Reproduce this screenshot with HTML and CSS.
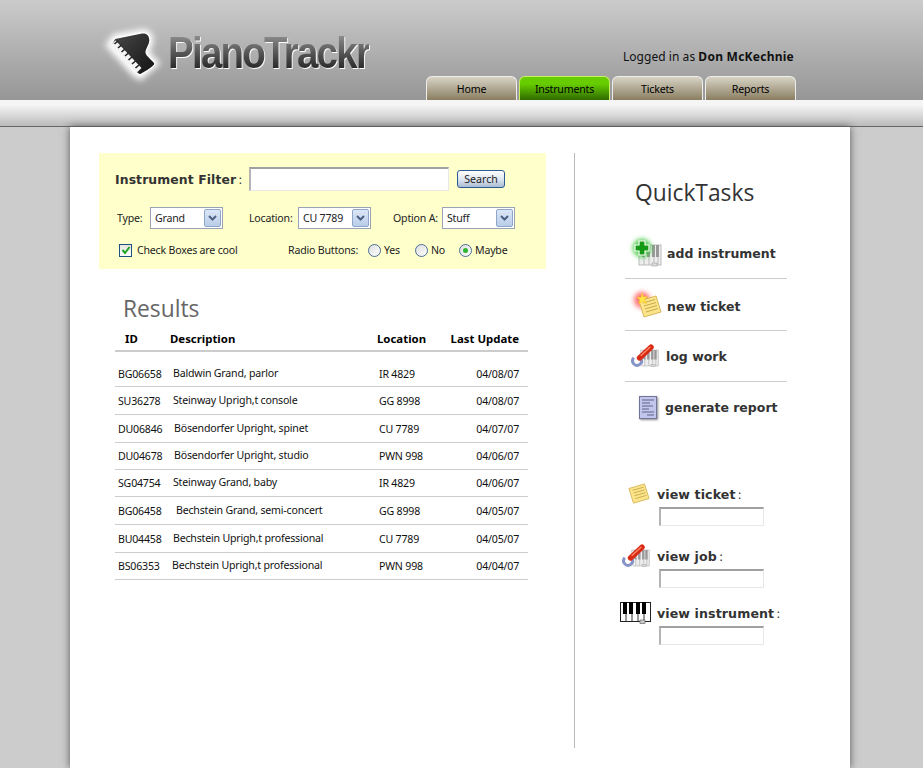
FILE: index.html
```html
<!DOCTYPE html>
<html lang="en">
<head>
<meta charset="utf-8">
<title>PianoTrackr</title>
<link rel="stylesheet" href="styles.css">
</head>
<body>
<svg class="defs" width="0" height="0" aria-hidden="true">
  <defs>
    <symbol id="keys-grey" viewBox="0 0 24 24">
      <rect x="1" y="2" width="22" height="20" fill="#eee" stroke="#bbb"/>
      <path d="M6 2v20M11 2v20M16 2v20M20 2v20" stroke="#bbb"/>
      <path d="M4 2h3v12H4zM9 2h3v12H9zM14 2h3v12h-3zM18 2h3v12h-3z" fill="#999"/>
      <rect x="14" y="20" width="5" height="3" fill="#ddd" stroke="#aaa" stroke-width=".7"/>
    </symbol>
    <symbol id="wrench" viewBox="0 0 28 24">
      <use href="#keys-grey" x="9" y="4" width="19" height="20"/>
      <path d="M2.8 13.8 A4.5 4.5 0 1 0 10.4 15.4" fill="none" stroke="#fff" stroke-width="4.4"/>
      <path d="M2.8 13.8 A4.5 4.5 0 1 0 10.4 15.4" fill="none" stroke="#8794c8" stroke-width="3"/>
      <path d="M8.5 14 L20 3.2" stroke="#d92a14" stroke-width="5.4" stroke-linecap="round"/>
      <path d="M10 11.5 L19 3.2" stroke="#ff8a6a" stroke-width="1.3" stroke-linecap="round"/>
    </symbol>
    <symbol id="note" viewBox="0 0 26 24">
      <path d="M2 6 L19 1 L24 17 L7 22 Z" fill="#fbe48a" stroke="#d7b65a"/>
      <path d="M6 8 L18 4.5M7 11 L19 7.5M8 14 L20 10.5M9 17 L21 13.5" stroke="#c9a94e"/>
    </symbol>
  </defs>
</svg>

<header class="top">
  <div class="top-inner">
    <div class="logo">
      <svg class="logo-mark" width="65" height="65" viewBox="0 0 65 65" aria-hidden="true">
        <defs>
          <filter id="glow" x="-40%" y="-40%" width="180%" height="180%"><feGaussianBlur stdDeviation="3"/></filter>
          <linearGradient id="body" x1="0" y1="0" x2="1" y2="1"><stop offset="0" stop-color="#4a4a4a"/><stop offset="1" stop-color="#111"/></linearGradient>
        </defs>
        <path d="M9 23 L15 15 L44 10 Q51 12 50 20 Q48 27 46 30 Q50 36 56 41 L40 55 L35 52 Z" fill="#fff" stroke="#fff" stroke-width="6" filter="url(#glow)"/>
        <path d="M10.7 23 L15 16.3 L43 10.7 Q49.5 11 50 18 C50 23 46.5 26 46 30 C46 34 52 37 55 41.3 C55 45 45 50 40 53 L36.7 50.7 Z" fill="url(#body)" stroke="#fff" stroke-width="1.2"/>
        <path d="M10.7 23 L15.5 18.5 L41.5 46 L36.7 50.7 Z" fill="#f4f4f4"/>
        <path d="M14.5 22 L18 19M18 26 L21.5 23M21.5 30 L25 27M25 34 L28.5 31M28.5 38 L32 35M32 42 L35.5 39M35.5 46 L39 43" stroke="#222" stroke-width="1.6"/>
      </svg>
      <span class="logo-text">PianoTrackr</span>
    </div>
    <div class="top-right">
      <p class="login">Logged in as <b>Don McKechnie</b></p>
      <nav class="tabs">
        <a class="tab">Home</a>
        <a class="tab tab-on">Instruments</a>
        <a class="tab">Tickets</a>
        <a class="tab">Reports</a>
      </nav>
    </div>
  </div>
</header>
<div class="band"></div>

<main class="page">
  <section class="left">
    <form class="filter">
      <div class="f-row1">
        <label class="f-title">Instrument Filter<span class="colon">:</span></label>
        <span class="text-in f-input"></span>
        <button type="button" class="search">Search</button>
      </div>
      <div class="f-row2">
        <span class="l-type">Type:</span>
        <span class="sel"><span>Grand</span><i class="arrow"><svg width="9" height="6" viewBox="0 0 9 6"><path d="M1 1l3.5 3.5L8 1" fill="none" stroke="#4d6185" stroke-width="2"/></svg></i></span>
        <span class="l-loc">Location:</span>
        <span class="sel"><span>CU 7789</span><i class="arrow"><svg width="9" height="6" viewBox="0 0 9 6"><path d="M1 1l3.5 3.5L8 1" fill="none" stroke="#4d6185" stroke-width="2"/></svg></i></span>
        <span class="l-opt">Option A:</span>
        <span class="sel"><span>Stuff</span><i class="arrow"><svg width="9" height="6" viewBox="0 0 9 6"><path d="M1 1l3.5 3.5L8 1" fill="none" stroke="#4d6185" stroke-width="2"/></svg></i></span>
      </div>
      <div class="f-row3">
        <span class="check"><svg width="10" height="10" viewBox="0 0 10 10"><path d="M1.5 5l2.5 3L8.5 2" fill="none" stroke="#21a121" stroke-width="2"/></svg></span>
        <span class="check-l">Check Boxes are cool</span>
        <span class="radio-title">Radio Buttons:</span>
        <span class="radio"></span><span class="r-yes">Yes</span>
        <span class="radio"></span><span class="r-no">No</span>
        <span class="radio radio-on"></span><span class="r-maybe">Maybe</span>
      </div>
    </form>

    <h2 class="results">Results</h2>
    <table class="grid">
      <colgroup><col class="c1"><col class="c2"><col class="c3"><col class="c4"></colgroup>
      <thead>
        <tr><th class="h-id">ID</th><th>Description</th><th>Location</th><th class="date">Last Update</th></tr>
      </thead>
      <tbody>
        <tr class="first tall"><td>BG06658</td><td class="d">Baldwin Grand, parlor</td><td class="loc">IR 4829</td><td class="date">04/08/07</td></tr>
        <tr class="tall"><td>SU36278</td><td class="d">Steinway Uprigh,t console</td><td class="loc">GG 8998</td><td class="date">04/08/07</td></tr>
        <tr class="tall"><td>DU06846</td><td class="d d-r1">Bösendorfer Upright, spinet</td><td class="loc">CU 7789</td><td class="date">04/07/07</td></tr>
        <tr><td>DU04678</td><td class="d d-r1">Bösendorfer Upright, studio</td><td class="loc">PWN 998</td><td class="date">04/06/07</td></tr>
        <tr><td>SG04754</td><td class="d">Steinway Grand, baby</td><td class="loc">IR 4829</td><td class="date">04/06/07</td></tr>
        <tr class="tall"><td>BG06458</td><td class="d d-r3">Bechstein Grand, semi-concert</td><td class="loc">GG 8998</td><td class="date">04/05/07</td></tr>
        <tr class="tall"><td>BU04458</td><td class="d">Bechstein Uprigh,t professional</td><td class="loc">CU 7789</td><td class="date">04/05/07</td></tr>
        <tr><td>BS06353</td><td class="d d-l1">Bechstein Uprigh,t professional</td><td class="loc">PWN 998</td><td class="date">04/04/07</td></tr>
      </tbody>
    </table>
  </section>

  <div class="rule"></div>

  <aside class="right">
    <h2 class="qt">QuickTasks</h2>
    <ul class="tasks">
      <li class="task">
        <span class="t-icon">
          <svg width="34" height="30" viewBox="0 0 34 30" aria-hidden="true">
            <defs><filter id="gg" x="-50%" y="-50%" width="200%" height="200%"><feGaussianBlur stdDeviation="2.5"/></filter></defs>
            <use href="#keys-grey" x="7" y="5" width="24" height="24"/>
            <circle cx="11" cy="10" r="9" fill="#3cc83c" filter="url(#gg)"/>
            <path d="M8 3h6v4h4v6h-4v4H8v-4H4V7h4z" fill="#159a15" stroke="#fff" stroke-width="1.2"/>
          </svg>
        </span>
        <span class="t-label">add instrument</span>
      </li>
      <li class="task task-b">
        <span class="t-icon">
          <svg width="34" height="30" viewBox="0 0 34 30" aria-hidden="true">
            <defs><filter id="gr" x="-50%" y="-50%" width="200%" height="200%"><feGaussianBlur stdDeviation="2.5"/></filter></defs>
            <circle cx="11" cy="9" r="8" fill="#ff7070" filter="url(#gr)"/>
            <use href="#note" x="6" y="4" width="26" height="24"/>
            <path d="M11 2l1.5 4 4-.5-3 3 2 4-4-2-3.5 2.5 1-4-3-3 4 .5z" fill="#ffe54a" stroke="#f7c21c" stroke-width=".5"/>
          </svg>
        </span>
        <span class="t-label">new ticket</span>
      </li>
      <li class="task">
        <span class="t-icon t-wrench"><svg width="28" height="24" aria-hidden="true"><use href="#wrench" width="28" height="24"/></svg></span>
        <span class="t-label">log work</span>
      </li>
      <li class="task task-last">
        <span class="t-icon t-report">
          <svg class="rep" width="20" height="25" viewBox="0 0 20 25" aria-hidden="true">
            <rect x="1.5" y="1.5" width="17" height="22" fill="#c3c6ec" stroke="#70739a"/>
            <path d="M4 5h12M4 8h8M4 11h11M4 14h7M4 17h12M9 20h7" stroke="#5f6288" stroke-width="1.1"/>
          </svg>
        </span>
        <span class="t-label t-gen">generate report</span>
      </li>
    </ul>

    <div class="views">
      <div class="view">
        <div class="v-head"><span class="v-icon"><svg class="i-note" width="24" height="22" aria-hidden="true"><use href="#note" width="24" height="22"/></svg></span><span class="v-label">view ticket<span class="colon">:</span></span></div>
        <span class="text-in v-input"></span>
      </div>
      <div class="view">
        <div class="v-head"><span class="v-icon"><svg class="i-wrench" width="28" height="24" aria-hidden="true"><use href="#wrench" width="28" height="24"/></svg></span><span class="v-label">view job<span class="colon">:</span></span></div>
        <span class="text-in v-input"></span>
      </div>
      <div class="view view-tight">
        <div class="v-head"><span class="v-icon">
          <svg width="31" height="22" viewBox="0 0 31 22" aria-hidden="true">
            <rect x=".5" y=".5" width="30" height="19" fill="#fff" stroke="#222"/>
            <path d="M6 1v18M12 1v18M18 1v18M24 1v18" stroke="#333"/>
            <path d="M3 0h4v12H3zM9 0h4v12H9zM16 0h4v12h-4zM22 0h4v12h-4z" fill="#000"/>
            <rect x="20" y="18" width="5" height="3.5" fill="#ccc" stroke="#555" stroke-width=".6"/>
          </svg></span><span class="v-label">view instrument<span class="colon">:</span></span></div>
        <span class="text-in v-input"></span>
      </div>
    </div>
  </aside>
</main>
</body>
</html>
```

FILE: styles.css
```css
* { box-sizing: border-box; }
html, body { margin: 0; padding: 0; height: 768px; overflow: hidden; }
body { background: #ccc; font-family: "Noto Sans", Tahoma, sans-serif; font-size: 10.6px; letter-spacing: -.2px; color: #222; }
.defs { position: absolute; }
svg { display: block; overflow: visible; }

.top { height: 100px; background: linear-gradient(#cbcbcb, #969696); }
.top-inner { width: 700px; margin-left: 100px; height: 100px; display: flex; }
.logo { width: 324px; display: flex; padding-top: 22px; }
.logo-mark { flex: none; }
.logo-text {
  display: inline-block; height: 52px; margin: 5px 0 0 3px;
  font: bold 44px/52px "Liberation Sans", Arial, sans-serif;
  letter-spacing: -2px;
  transform: scaleX(.875); transform-origin: left top;
  background: linear-gradient(#8a8a8a 18%, #555 50%, #222 85%);
  -webkit-background-clip: text; background-clip: text; color: transparent;
  filter: drop-shadow(1px 1px 0 #fff);
}
.top-right { width: 372px; margin-left: 2px; display: flex; flex-direction: column; }
.login { margin: 48px 4px 0 0; height: 18px; text-align: right; font: 12px/18px "Noto Sans", sans-serif; letter-spacing: .05px; color: #111; }
.login b { font-weight: bold; letter-spacing: .25px; }
.tabs { display: flex; gap: 2px; margin-top: 10px; }
.tab {
  width: 91px; height: 24px; line-height: 24px; text-align: center; color: #000;
  border: 1px solid #eeeeee; border-bottom: 0; border-radius: 6px 6px 0 0;
  background: linear-gradient(#d7d3c5, #8a7e61);
}
.tab-on { background: linear-gradient(#67cd00 30%, #2f6a00); border-color: #c8f060; }

.band { height: 27px; background: linear-gradient(#f5f5f5 20%, #bdbdbd 96%); border-bottom: 1px solid #666; }

.page { width: 780px; height: 641px; margin-left: 70px; background: #fff; box-shadow: 0 0 8px #555; display: flex; padding: 26px 0 0 29px; }
.left { width: 447px; flex: none; }
.rule { width: 1px; height: 595px; background: #bbb; margin-left: 28px; flex: none; }
.right { flex: 1; padding-left: 50px; }

.filter { height: 116px; background: #ffffcc; padding-top: 14px; }
.f-row1 { display: flex; align-items: center; height: 24px; padding-left: 16px; }
.f-title { width: 134px; padding-top: 2px; font: bold 12.4px/24px "DejaVu Sans", sans-serif; letter-spacing: .1px; color: #333; }
.colon { font-weight: normal; margin-left: 2px; }
.text-in { display: block; height: 24px; background: #fff; border-style: solid; border-width: 2px 1px 1px 2px; border-color: #a0a0a0 #e8e8e8 #e8e8e8 #b4b4b4; }
.f-input { width: 200px; }
.search { width: 48px; height: 18px; margin-left: 8px; padding: 0; font: 10.6px "Noto Sans", sans-serif; color: #222; border: 1px solid #2e5a94; border-radius: 3px; background: linear-gradient(#fff, #dbe3ee 55%, #a9bbd3); }

.f-row2 { display: flex; align-items: center; height: 22px; margin-top: 16px; padding-left: 18px; }
.l-type { width: 33px; }
.l-loc { width: 49px; margin-left: 26px; }
.l-opt { width: 49px; margin-left: 22px; }
.sel { width: 73px; height: 22px; border: 1px solid #9aa3b5; background: #fff; display: flex; align-items: center; justify-content: space-between; padding: 1px 1px 1px 4px; }
.arrow { width: 17px; height: 18px; border: 1px solid #8ea6c8; border-radius: 2px; background: linear-gradient(#dbe6f6, #b9cde8); display: flex; align-items: center; justify-content: center; }

.f-row3 { display: flex; align-items: center; height: 14px; margin-top: 14px; padding-left: 20px; }
.check { width: 13px; height: 13px; border: 1px solid #1c5180; background: linear-gradient(#e6e6de, #fff); display: flex; align-items: center; justify-content: center; margin-right: 5px; }
.check-l { width: 151px; }
.radio-title { width: 80px; }
.radio { width: 13px; height: 13px; border-radius: 50%; border: 1px solid #4a6d96; background: linear-gradient(135deg, #ddd, #fff); margin-right: 3px; }
.radio-on { position: relative; }
.radio-on::after { content: ""; position: absolute; left: 3px; top: 3px; width: 5px; height: 5px; border-radius: 50%; background: #2fb52f; }
.r-yes { width: 31px; }
.r-no { width: 28px; }

.results { margin: 25px 0 0 24px; height: 33px; font: normal 22.8px/30px "Open Sans", sans-serif; letter-spacing: 0; color: #666; }
.grid { width: 413px; margin-left: 16px; border-collapse: separate; border-spacing: 0; table-layout: fixed; }
.c1 { width: 55px; } .c2 { width: 207px; } .c3 { width: 70px; } .c4 { width: 81px; }
.grid th { height: 25px; padding: 0; text-align: left; font-size: 11.4px; letter-spacing: 0; font-weight: bold; color: #000; border-bottom: 2px solid #ccc; }
.grid td { height: 27px; padding: 0 0 0 3px; border-bottom: 1px solid #ccc; color: #111; white-space: nowrap; }
.grid .tall td { height: 28px; }
.grid .first td { height: 35px; padding-top: 9px; }
.grid th.h-id { padding-left: 10px; }
.grid .date { text-align: right; padding-right: 9px; padding-left: 0; }
.grid td.d { padding-bottom: 2px; }
.grid td.d-r1 { padding-left: 4px; }
.grid td.d-r3 { padding-left: 6px; }
.grid td.d-l1 { padding-left: 2px; }
.grid td.loc { padding-left: 2px; }

.qt { margin: 25px 0 0 10px; height: 30px; font: normal 22.8px/30px "Open Sans", sans-serif; letter-spacing: 0; color: #333; }
.tasks { list-style: none; margin: 20px 0 0; padding: 0; width: 162px; }
.task { height: 51px; display: flex; align-items: center; border-bottom: 1px solid #ccc; }
.task-b { height: 52px; padding-top: 3px; }
.task-last { border-bottom: 0; }
.t-icon { width: 42px; flex: none; padding-left: 6px; }
.t-wrench { width: 41px; }
.t-report { width: 40px; padding-left: 13px; }
.rep { filter: drop-shadow(1px 1px 1px #888); }
.t-label { font: bold 12.5px "DejaVu Sans", sans-serif; letter-spacing: 0; color: #333; }

.views { margin: 50px 0 0 -5px; }
.view { margin-bottom: 19px; }
.view-tight { margin-top: -5px; }
.v-head { display: flex; align-items: center; height: 22px; margin-bottom: 2px; }
.v-icon { width: 37px; flex: none; display: flex; justify-content: flex-start; }
.i-note { margin-left: 7px; }
.i-wrench { margin-left: 2px; }
.v-label { font: bold 12.6px "DejaVu Sans", sans-serif; letter-spacing: .1px; color: #333; }
.v-input { width: 105px; height: 19px; margin-left: 39px; }
```
